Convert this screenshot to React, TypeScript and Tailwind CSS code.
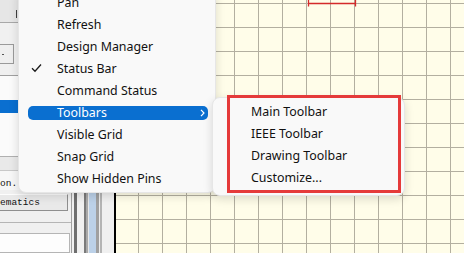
import React from "react";

const mainItems = [
  { label: "Pan" },
  { label: "Refresh" },
  { label: "Design Manager" },
  { label: "Status Bar", checked: true },
  { label: "Command Status" },
  { label: "Toolbars", active: true, sub: true },
  { label: "Visible Grid" },
  { label: "Snap Grid" },
  { label: "Show Hidden Pins" },
];

const subItems = ["Main Toolbar", "IEEE Toolbar", "Drawing Toolbar", "Customize..."];

function MainMenu() {
  return (
    <div className="absolute left-[18px] top-[-13px] w-[198px] rounded-[8px] bg-[#f9f9f9] border border-[#e6e6e6] shadow-[0_3px_10px_rgba(0,0,0,0.14)] pt-[4px] pb-[2px]">
      {mainItems.map((it) => (
        <div key={it.label} className="h-[22px] flex items-center pl-[9px] pr-[7px]">
          <div
            className={
              "relative flex-1 h-[14px] flex items-center rounded-[5px] pl-[29px] " +
              (it.active ? "bg-[#0a6fd0] text-white" : "text-[#111111]")
            }
          >
            {it.checked && (
              <svg className="absolute left-[3px] top-[1px]" width="11" height="10" viewBox="0 0 11 10">
                <path d="M1 5.2 L4 8.2 L10 1.5" fill="none" stroke="#1b1b1b" strokeWidth="1.3" />
              </svg>
            )}
            <span className="text-[12.4px] leading-none">{it.label}</span>
            {it.sub && (
              <svg className="absolute right-[3px] top-[3px]" width="5" height="8" viewBox="0 0 5 8">
                <path d="M1 0.8 L4 4 L1 7.2" fill="none" stroke="#ffffff" strokeWidth="1.2" />
              </svg>
            )}
          </div>
        </div>
      ))}
    </div>
  );
}

function SubMenu() {
  return (
    <div className="absolute left-[212px] top-[97px] w-[193px] rounded-[8px] bg-[#f9f9f9] border border-[#e6e6e6] shadow-[0_3px_10px_rgba(0,0,0,0.14)] pt-[3px] pb-[6px]">
      {subItems.map((s) => (
        <div key={s} className="h-[22px] flex items-center pl-[38px] text-[12.4px] leading-none text-[#111111]">
          {s}
        </div>
      ))}
    </div>
  );
}

function LeftPanel() {
  return (
    <div className="w-[114px] h-full flex shrink-0 bg-[#f0f0f0]">
      <div className="w-[72px] h-full flex flex-col border-r border-[#a0a0a0] overflow-hidden">
        <div className="h-[23px] shrink-0 bg-[#e6e6e6] border-b border-[#a8a8a8] relative">
          <div className="absolute left-[16px] top-[10px] w-[1px] h-[8px] bg-[#404040]" />
        </div>
        <div className="h-[21px] shrink-0" />
        <div className="h-[20px] w-[14px] shrink-0 border border-[#9a9a9a] bg-[#efefef] border-l-0 relative">
          <div className="absolute left-[2px] top-[9px] w-[2px] h-[1px] bg-[#555]" />
        </div>
        <div className="h-[11px] shrink-0" />
        <div className="h-[81px] shrink-0 border-t border-[#a0a0a0] bg-[#fbfbfb] flex flex-col">
          <div className="h-[24px] shrink-0" />
          <div className="h-[13px] shrink-0 bg-[#0a6fd0]" />
        </div>
        <div className="h-[14px] shrink-0 border-t border-[#b0b0b0] bg-[#e9e9e9]" />
        <div className="h-[20px] shrink-0 bg-[#f7f7f7] border-t border-[#c8c8c8] flex items-end pb-[2px]">
          <span className="text-[9.5px] leading-none text-[#111] font-['Liberation_Mono',monospace]">on.</span>
        </div>
        <div className="h-[4px] shrink-0" />
        <div className="h-[17px] w-[68px] shrink-0 bg-[#e9e9e9] border border-[#8f8f8f] border-l-0 border-t-[#fdfdfd] flex items-center">
          <span className="text-[9.5px] leading-none text-[#111] font-['Liberation_Mono',monospace]">ematics</span>
        </div>
        <div className="h-[11px] shrink-0" />
        <div className="h-[1px] w-[71px] shrink-0 bg-[#b5b5b5]" />
        <div className="h-[10px] shrink-0" />
        <div className="flex-1 w-[70px] bg-[#fdfdfd] border border-[#b5b5b5] border-l-0" />
      </div>
      <div className="w-[2px] h-full" />
      <div className="w-[3px] h-full bg-[#6e6e6e]" />
      <div className="w-[7px] h-full" />
      <div className="w-[2px] h-full bg-[#7a7a7a]" />
      <div className="w-[2px] h-full bg-[#a9a9a9]" />
      <div className="w-[1px] h-full bg-[#e8e8e8]" />
      <div className="w-[7px] h-full bg-[#bcd1e8]" />
      <div className="w-[3px] h-full bg-[#a0a0a0]" />
      <div className="w-[1px] h-full bg-[#ececec]" />
      <div className="w-[2px] h-full bg-[#b4b4b4]" />
      <div className="flex-1 h-full" />
    </div>
  );
}

function Canvas() {
  return (
    <div className="relative flex-1 h-full border-l-[2px] border-black bg-[#fffde9] bg-[image:linear-gradient(to_right,#b3afa0_1px,transparent_1px),linear-gradient(to_bottom,#b3afa0_1px,transparent_1px)] bg-[length:24px_24px] bg-[position:22px_3px]">
      <svg className="absolute left-[191px] top-0" width="50" height="8" viewBox="0 0 50 8">
        <path d="M1.5 0 V6.5 M1.5 3.5 H48.5 M48.5 0 V6.5" fill="none" stroke="#d42a2a" strokeWidth="1.3" />
      </svg>
    </div>
  );
}

export default function App() {
  return (
    <div className="relative w-[464px] h-[253px] overflow-hidden flex bg-[#f0f0f0] font-['Noto_Sans',sans-serif]">
      <LeftPanel />
      <Canvas />
      <MainMenu />
      <SubMenu />
      <div className="absolute left-[227px] top-[95px] w-[174px] h-[98px] border-[3px] border-[#e53a3a]" />
    </div>
  );
}
